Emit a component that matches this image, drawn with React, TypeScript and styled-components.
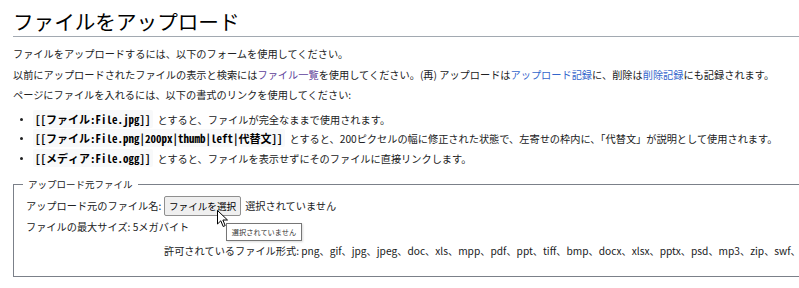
import { createGlobalStyle, styled } from "styled-components";

const GlobalStyle = createGlobalStyle`
    html, body {
        margin: 0;
        padding: 0;
        background: #ffffff;
        overflow: hidden;
    }
    body {
        font-family: "Noto Sans CJK JP", "Noto Sans", sans-serif;
        color: #202122;
        width: 799px;
        height: 288px;
    }
`;

const Page = styled.div`
    position: relative;
    width: 1100px;
    padding: 0 0 0 13px;
`;

const Heading = styled.h1`
    margin: 0;
    padding-top: 9px;
    padding-bottom: 2px;
    font-size: 20.6px;
    line-height: 25px;
    font-weight: 400;
    color: #000;
    border-bottom: 1px solid #a2a9b1;
    width: 786px;
`;

const Content = styled.div`
    margin-top: 7px;
    font-size: 10.2px;
`;

const Para = styled.p`
    margin: 0;
    line-height: 20.5px;
    white-space: nowrap;
`;

const Link = styled.a<{ $visited?: boolean }>`
    color: ${(p) => (p.$visited ? "#5d3f99" : "#3366cc")};
    text-decoration: none;
`;

const List = styled.ul`
    list-style: none;
    margin: 4px 0 0;
    padding: 0;
`;

const Item = styled.li`
    position: relative;
    padding-left: 20px;
    line-height: 19.5px;
    white-space: nowrap;
    &::before {
        content: "";
        position: absolute;
        left: 7px;
        top: 8px;
        width: 3px;
        height: 3px;
        border-radius: 50%;
        background: #202122;
    }
`;

const Code = styled.code`
    font-family: "Noto Sans Mono CJK JP", "Liberation Mono", monospace;
    font-size: 11px;
    font-weight: 700;
    color: #000;
    background: #f8f9fa;
    border-radius: 2px;
    padding: 1px 2px;
    margin-right: 5px;
`;

const Fieldset = styled.fieldset`
    margin: 8px 0 0;
    padding: 3px 0 15px 12px;
    border: 1px solid #7b8089;
    border-right: none;
    width: 1000px;
    font-size: 10.2px;
`;

const Legend = styled.legend`
    font-size: 9.5px;
    line-height: 16px;
    padding: 0 5px;
    margin-left: -3px;
`;

const FormGrid = styled.div`
    display: grid;
    grid-template-columns: 138px auto;
    align-items: center;
`;

const Label = styled.div<{ $wide?: boolean }>`
    line-height: 20px;
    white-space: nowrap;
    grid-column: ${(p) => (p.$wide ? "1 / span 2" : "auto")};
`;

const Field = styled.div<{ $gap?: number }>`
    display: flex;
    align-items: center;
    gap: 4px;
    white-space: nowrap;
    line-height: 20px;
    margin-top: ${(p) => p.$gap ?? 0}px;
`;

const FileButton = styled.button`
    height: 20px;
    padding: 0 4px;
    font-family: inherit;
    font-size: 9.6px;
    color: #000;
    background: #efefef;
    border: 1px solid #8f8f8f;
    border-radius: 2px;
    margin: 1px 0;
`;

const Tooltip = styled.div`
    position: absolute;
    left: 226px;
    top: 223px;
    width: 74px;
    height: 16px;
    border: 1px solid #767676;
    background: #fff;
    box-shadow: 1px 1px 2px rgba(0, 0, 0, 0.15);
    font-size: 7.2px;
    line-height: 16px;
    text-align: center;
    color: #333;
`;

const Cursor = styled.svg`
    position: absolute;
    left: 217px;
    top: 210px;
`;

export default function App() {
    return (
        <>
            <GlobalStyle />
            <Page>
                <Heading>ファイルをアップロード</Heading>
                <Content>
                    <Para>ファイルをアップロードするには、以下のフォームを使用してください。</Para>
                    <Para>
                        以前にアップロードされたファイルの表示と検索には
                        <Link $visited href="#">ファイル一覧</Link>
                        を使用してください。(再) アップロードは
                        <Link href="#">アップロード記録</Link>
                        に、削除は<Link href="#">削除記録</Link>にも記録されます。
                    </Para>
                    <Para>ページにファイルを入れるには、以下の書式のリンクを使用してください:</Para>
                    <List>
                        <Item>
                            <Code>[[ファイル:File.jpg]]</Code>とすると、ファイルが完全なままで使用されます。
                        </Item>
                        <Item>
                            <Code>[[ファイル:File.png|200px|thumb|left|代替文]]</Code>とすると、200ピクセルの幅に修正された状態で、左寄せの枠内に、「代替文」が説明として使用されます。
                        </Item>
                        <Item>
                            <Code>[[メディア:File.ogg]]</Code>とすると、ファイルを表示せずにそのファイルに直接リンクします。
                        </Item>
                    </List>
                </Content>
                <Fieldset>
                    <Legend>アップロード元ファイル</Legend>
                    <FormGrid>
                        <Label>アップロード元のファイル名:</Label>
                        <Field>
                            <FileButton type="button">ファイルを選択</FileButton>
                            <span>選択されていません</span>
                        </Field>
                        <Label $wide>ファイルの最大サイズ: 5メガバイト</Label>
                        <div />
                        <Field $gap={4}>
                            許可されているファイル形式: png、gif、jpg、jpeg、doc、xls、mpp、pdf、ppt、tiff、bmp、docx、xlsx、pptx、psd、mp3、zip、swf、
                        </Field>
                    </FormGrid>
                </Fieldset>
                <Tooltip>選択されていません</Tooltip>
                <Cursor width="12" height="18" viewBox="0 0 12 18">
                    <path d="M0.5 0.5 L0.5 14 L3.8 10.8 L6.2 16.5 L8.2 15.6 L5.9 10 L10.5 10 Z" fill="#fff" stroke="#000" strokeWidth="1" strokeLinejoin="round" />
                </Cursor>
            </Page>
        </>
    );
}
